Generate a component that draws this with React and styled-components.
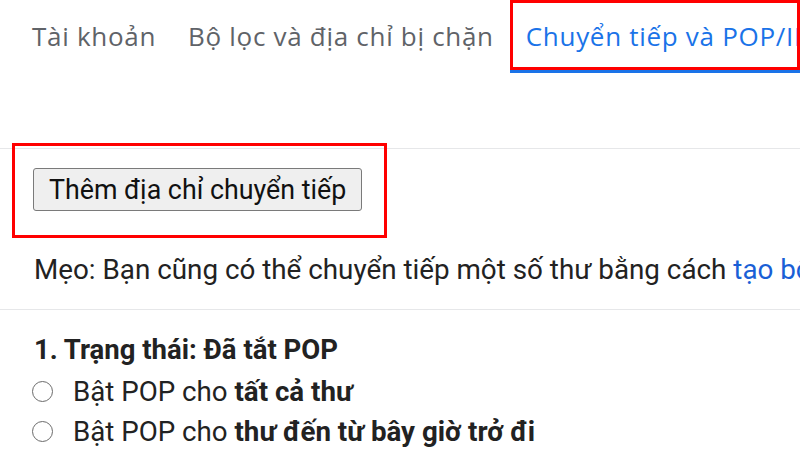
import styled, { createGlobalStyle } from "styled-components";

const GlobalStyle = createGlobalStyle`
    body {
        margin: 0;
        background: #fff;
        font-family: Roboto, "Liberation Sans", sans-serif;
    }
`
const Page = styled.div`
    width: 800px;
    height: 450px;
    overflow: hidden;
`
const TabBar = styled.div`
    display: flex;
    height: 73px;
    padding-left: 16px;
`
const Tab = styled.div`
    display: flex;
    flex-direction: column;
    flex: ${props => props.$active ? "1" : "none"};
    min-width: 0;
    border-bottom: 3px solid ${props => props.$active ? "#1a73e8" : "transparent"};
    white-space: nowrap;
`
const TabLabel = styled.div`
    flex: 1;
    display: flex;
    align-items: center;
    overflow: hidden;
    padding: 1px ${props => props.$marked ? 13 : 16}px 0;
    border: ${props => props.$marked ? "3px solid #f00" : "none"};
    font-family: "Open Sans", "Noto Sans", sans-serif;
    font-size: 26px;
    letter-spacing: 0.7px;
    color: ${props => props.$active ? "#1a73e8" : "#5f6368"};
`
const Section = styled.div`
    border-top: 1px solid #e6e7e9;
    margin-top: ${props => props.$top}px;
`
const Highlight = styled.div`
    box-sizing: border-box;
    width: 375px;
    height: 95px;
    margin: -6px 0 0 12px;
    padding: 22px 0 0 18px;
    border: 3px solid #f00;
`
const Button = styled.button`
    height: 43px;
    padding: 0 15px;
    background: #efefef;
    border: 1px solid #7a7a7a;
    border-radius: 3px;
    font-family: Roboto, "Liberation Sans", sans-serif;
    font-size: 26.8px;
    color: #111;
    white-space: nowrap;
`
const Tip = styled.p`
    margin: 15px 0 22px 34px;
    font-size: 27.8px;
    line-height: 34px;
    color: #222;
    white-space: nowrap;
`
const Link = styled.span`
    color: #1a5fd6;
`
const Heading = styled.div`
    margin: 22px 0 3px 34px;
    font-size: 27.5px;
    line-height: 36px;
    font-weight: bold;
    color: #222;
`
const Option = styled.label`
    display: flex;
    align-items: center;
    height: 40px;
    padding-left: 32px;
    font-size: 27.7px;
    color: #222;
    white-space: nowrap;
`
const Radio = styled.span`
    box-sizing: border-box;
    flex: none;
    width: 21px;
    height: 21px;
    margin-right: 20px;
    border: 1.6px solid #6b6b6b;
    border-radius: 50%;
`

function App () {
    return (
        <Page>
            <GlobalStyle />
            <TabBar>
                <Tab><TabLabel>Tài khoản</TabLabel></Tab>
                <Tab><TabLabel>Bộ lọc và địa chỉ bị chặn</TabLabel></Tab>
                <Tab $active><TabLabel $active $marked>Chuyển tiếp và POP/IMAP</TabLabel></Tab>
            </TabBar>
            <Section $top={75}>
                <Highlight>
                    <Button>Thêm địa chỉ chuyển tiếp</Button>
                </Highlight>
                <Tip>
                    Mẹo: Bạn cũng có thể chuyển tiếp một số thư bằng cách <Link>tạo bộ lọc!</Link>
                </Tip>
            </Section>
            <Section $top={0}>
                <Heading>1. Trạng thái: Đã tắt POP</Heading>
                <Option><Radio />Bật POP cho&nbsp;<b>tất cả thư</b></Option>
                <Option><Radio />Bật POP cho&nbsp;<b>thư đến từ bây giờ trở đi</b></Option>
            </Section>
        </Page>
    )
}

export default App
